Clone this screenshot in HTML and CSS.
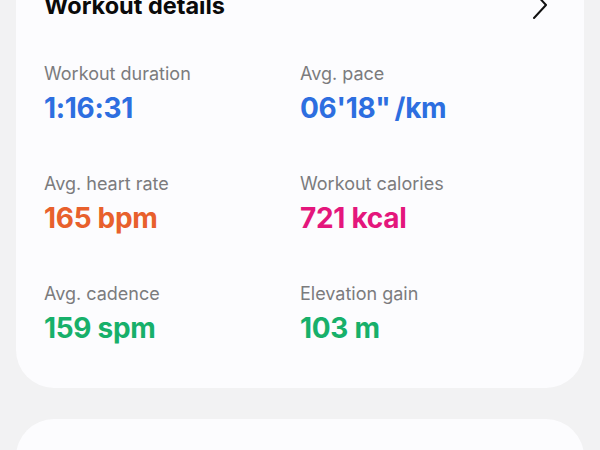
FILE: index.html
```html
<!DOCTYPE html>
<html>
<head>
<meta charset="utf-8">
<link rel="stylesheet" href="styles.css">
</head>
<body>
<div class="page">
  <section class="card details">
    <header class="card-head">
      <h2 class="title">Workout details</h2>
      <svg class="chev" width="20" height="30" viewBox="0 0 20 30"><path d="M4 1 L16 14 L4 27" fill="none" stroke="#111" stroke-width="2" stroke-linecap="round" stroke-linejoin="round"/></svg>
    </header>
    <div class="grid">
      <div class="stat"><div class="label">Workout duration</div><div class="value blue">1:16:31</div></div>
      <div class="stat"><div class="label">Avg. pace</div><div class="value blue">06'18"&thinsp;/km</div></div>
      <div class="stat"><div class="label">Avg. heart rate</div><div class="value orange">165 bpm</div></div>
      <div class="stat"><div class="label">Workout calories</div><div class="value pink">721 kcal</div></div>
      <div class="stat"><div class="label">Avg. cadence</div><div class="value green">159 spm</div></div>
      <div class="stat"><div class="label">Elevation gain</div><div class="value green">103 m</div></div>
    </div>
  </section>
  <section class="card next"></section>
</div>
</body>
</html>
```
FILE: styles.css
```css
html, body {
  margin: 0;
  padding: 0;
  background: #f2f2f3;
  overflow: hidden;
}
body {
  font-family: Inter, "Noto Sans", sans-serif;
  width: 600px;
  height: 450px;
}
.page {
  padding: 0 16px;
  display: flex;
  flex-direction: column;
  gap: 31px;
}
.card {
  background: #fcfcfe;
  border-radius: 38px;
}
.details {
  margin-top: -40px;
  padding: 0 28px 43px 28px;
}
.card-head {
  display: flex;
  justify-content: space-between;
  align-items: flex-start;
  height: 70px;
}
.title {
  margin: 32px 0 0 0;
  font-size: 23.5px;
  font-weight: 700;
  color: #0a0a0a;
  line-height: 28px;
}
.chev {
  margin-right: 6px;
  margin-top: 31px;
}
.grid {
  display: grid;
  grid-template-columns: 256px 256px;
  row-gap: 47px;
  margin-top: 32px;
}
.label {
  font-size: 18px;
  line-height: 24px;
  color: #7b7b7d;
  font-weight: 400;
}
.value {
  font-size: 28px;
  line-height: 34px;
  font-weight: 700;
  margin-top: 5px;
  letter-spacing: -0.3px;
}
.blue { color: #2d6ee0; }
.orange { color: #e8602c; }
.pink { color: #e4167c; }
.green { color: #17b06a; }
.next {
  height: 120px;
}
```
